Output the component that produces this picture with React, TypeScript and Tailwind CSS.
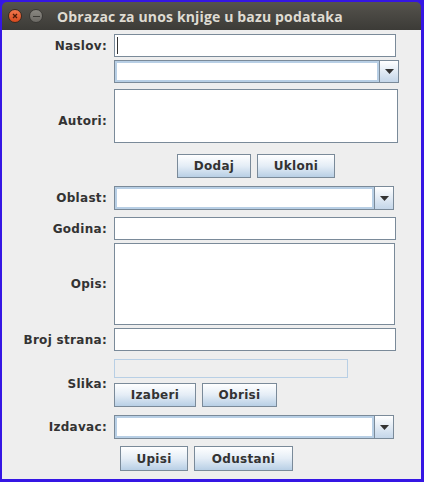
import React from "react";

const lbl = "w-[105px] shrink-0 text-right text-[12px] font-bold text-[#333333] leading-none tracking-[0.3px]";
const field = "h-[23px] border border-[#7a8a99] bg-white";
const btn =
  "flex items-center justify-center border border-[#7a8a99] bg-gradient-to-b from-white via-[#e4edf6] to-[#b8cfe5] text-[12px] font-bold text-[#333333] tracking-[0.3px]";

function Combo({ w }: { w: string }) {
  return (
    <div className={`flex h-[24px] ${w} border border-[#7a8a99] bg-white`}>
      <div className="flex-1 border-2 border-[#b8cfe5] bg-white" />
      <div className="flex w-[19px] items-center justify-center border-l border-[#7a8a99] bg-gradient-to-b from-white to-[#c4d6e9]">
        <svg width="9" height="5" viewBox="0 0 9 5">
          <path d="M0 0H9L4.5 5Z" fill="#333333" />
        </svg>
      </div>
    </div>
  );
}

export default function App() {
  return (
    <div
      className="flex h-[482px] w-[424px] flex-col bg-[#3516e4] pb-[3px] pl-[2px] pr-[3px] pt-[2px]"
      style={{ fontFamily: '"DejaVu Sans", sans-serif' }}
    >
      {/* title bar */}
      <div className="flex h-[28px] shrink-0 items-center rounded-t-[5px] bg-gradient-to-b from-[#55534d] to-[#3c3b37]">
        <div className="ml-[6px] flex h-[14px] w-[14px] items-center justify-center rounded-full bg-gradient-to-b from-[#f2774c] to-[#d8491c] border border-[#3a2a20]">
          <svg width="6" height="6" viewBox="0 0 6 6">
            <path d="M1 1L5 5M5 1L1 5" stroke="#4a1a08" strokeWidth="1.3" />
          </svg>
        </div>
        <div className="ml-[7px] flex h-[14px] w-[14px] items-center justify-center rounded-full bg-gradient-to-b from-[#8a8882] to-[#6b6964] border border-[#3a3935]">
          <div className="h-[1px] w-[7px] bg-[#3c3b37]" />
        </div>
        <div
          className="ml-[14px] text-[14px] font-bold text-[#dfdbd2] tracking-[0.15px]"
          style={{ fontFamily: '"Open Sans", sans-serif' }}
        >
          Obrazac za unos knjige u bazu podataka
        </div>
      </div>

      {/* body */}
      <div className="flex flex-1 flex-col bg-[#eeeeee]">
        {/* Naslov */}
        <div className="mt-[4px] flex items-center gap-[7px]">
          <div className={lbl}>Naslov:</div>
          <div className={`${field} w-[282px] relative`}>
            <div className="absolute left-[2px] top-[2px] h-[17px] w-[1px] bg-[#333333]" />
          </div>
        </div>
        {/* Autori combo */}
        <div className="mt-[3px] flex gap-[7px]">
          <div className="w-[105px] shrink-0" />
          <div className="flex h-[23px] w-[285px] border border-[#7a8a99] bg-white">
            <div className="flex-1 border-2 border-[#b8cfe5] bg-white" />
            <div className="flex w-[19px] items-center justify-center border-l border-[#7a8a99] bg-gradient-to-b from-white to-[#c4d6e9]">
              <svg width="9" height="5" viewBox="0 0 9 5">
                <path d="M0 0H9L4.5 5Z" fill="#333333" />
              </svg>
            </div>
          </div>
        </div>
        {/* Autori textarea */}
        <div className="mt-[6px] flex items-center gap-[7px]">
          <div className={`${lbl} mt-[10px]`}>Autori:</div>
          <div className="h-[54px] w-[284px] border border-[#7a8a99] bg-white" />
        </div>
        {/* Dodaj / Ukloni */}
        <div className="mt-[11px] flex gap-[6px] pl-[175px]">
          <div className={`${btn} h-[24px] w-[74px]`}>Dodaj</div>
          <div className={`${btn} h-[24px] w-[78px]`}>Ukloni</div>
        </div>
        {/* Oblast */}
        <div className="mt-[8px] flex items-center gap-[7px]">
          <div className={lbl}>Oblast:</div>
          <Combo w="w-[280px]" />
        </div>
        {/* Godina */}
        <div className="mt-[7px] flex items-center gap-[7px]">
          <div className={lbl}>Godina:</div>
          <div className={`${field} w-[282px]`} />
        </div>
        {/* Opis */}
        <div className="mt-[3px] flex items-center gap-[7px]">
          <div className={lbl}>Opis:</div>
          <div className="h-[82px] w-[281px] border border-[#7a8a99] bg-white" />
        </div>
        {/* Broj strana */}
        <div className="mt-[3px] flex items-center gap-[7px]">
          <div className={lbl}>Broj strana:</div>
          <div className={`${field} w-[282px]`} />
        </div>
        {/* Slika */}
        <div className="mt-[8px] flex gap-[7px]">
          <div className={`${lbl} mt-[19px]`}>Slika:</div>
          <div className="flex flex-col">
            <div className="h-[19px] w-[234px] border border-[#b8cfe5] bg-[#eeeeee]" />
            <div className="mt-[5px] flex gap-[6px]">
              <div className={`${btn} h-[24px] w-[82px]`}>Izaberi</div>
              <div className={`${btn} h-[24px] w-[75px]`}>Obrisi</div>
            </div>
          </div>
        </div>
        {/* Izdavac */}
        <div className="mt-[8px] flex items-center gap-[7px]">
          <div className={lbl}>Izdavac:</div>
          <Combo w="w-[280px]" />
        </div>
        {/* Upisi / Odustani */}
        <div className="mt-[7px] flex gap-[6px] pl-[118px]">
          <div className={`${btn} h-[25px] w-[68px]`}>Upisi</div>
          <div className={`${btn} h-[25px] w-[99px]`}>Odustani</div>
        </div>
      </div>
    </div>
  );
}
